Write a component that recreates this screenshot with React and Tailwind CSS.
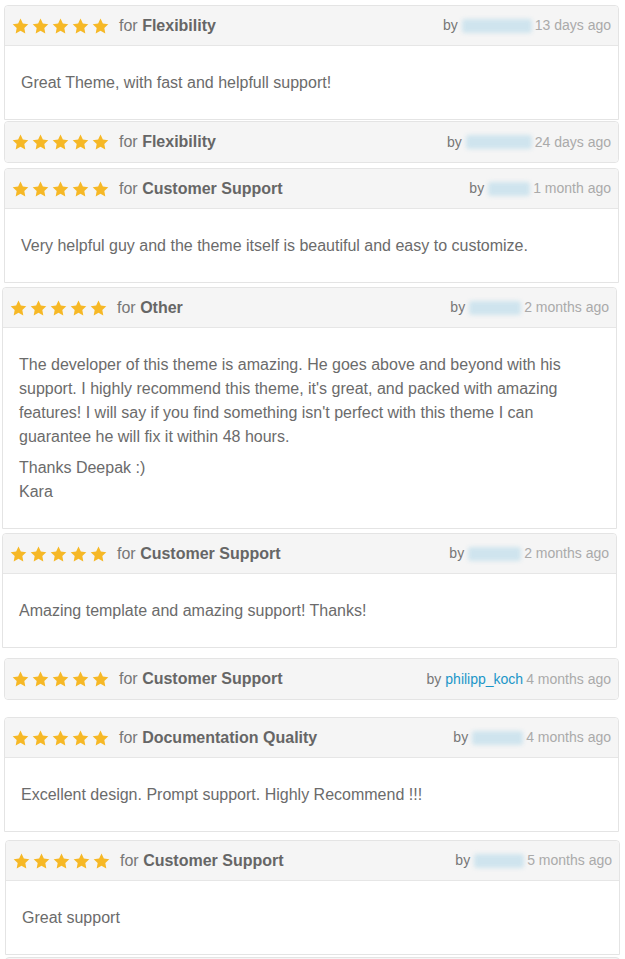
import React from 'react';

const reviews = [
  { topic: 'Flexibility', name: 70, time: '13 days ago', body: ['Great Theme, with fast and helpfull support!'], cls: 'mt-[5px] ml-[4px]' },
  { topic: 'Flexibility', name: 66, time: '24 days ago', cls: 'mt-[1px] ml-[4px]' },
  { topic: 'Customer Support', name: 42, time: '1 month ago', body: ['Very helpful guy and the theme itself is beautiful and easy to customize.'], cls: 'mt-[5px] ml-[4px]' },
  {
    topic: 'Other',
    name: 52,
    time: '2 months ago',
    body: [
      "The developer of this theme is amazing. He goes above and beyond with his support. I highly recommend this theme, it's great, and packed with amazing features! I will say if you find something isn't perfect with this theme I can guarantee he will fix it within 48 hours.",
      'Thanks Deepak :)\nKara',
    ],
    cls: 'mt-[4px] ml-[2px]',
  },
  { topic: 'Customer Support', name: 53, time: '2 months ago', body: ['Amazing template and amazing support! Thanks!'], cls: 'mt-[4px] ml-[2px]' },
  { topic: 'Customer Support', user: 'philipp_koch', time: '4 months ago', cls: 'mt-[10px] ml-[4px]' },
  { topic: 'Documentation Quality', name: 51, time: '4 months ago', body: ['Excellent design. Prompt support. Highly Recommend !!!'], cls: 'mt-[17px] ml-[4px]' },
  { topic: 'Customer Support', name: 50, time: '5 months ago', body: ['Great support'], cls: 'mt-[8px] ml-[5px]' },
];

const Star = () => (
  <svg width="17" height="16" viewBox="0 0 24 23" fill="#f6b826">
    <path d="M12 0.8l3.4 7.2 7.8 1-5.7 5.4 1.4 7.8L12 18.4l-6.9 3.8 1.4-7.8L0.8 9l7.8-1z" />
  </svg>
);

const ReviewCard = ({ review }) => (
  <div className={`w-[615px] shrink-0 border border-[#e4e4e4] bg-white ${review.body ? 'rounded-t-[4px]' : 'rounded-[4px]'} ${review.cls}`}>
    <div className={`h-[40px] flex items-center justify-between pl-[7px] pr-[7px] bg-[#f5f5f5] ${review.body ? 'border-b border-[#e6e6e6] rounded-t-[4px]' : 'rounded-[4px]'}`}>
      <div className="flex items-center">
        <div className="flex gap-[3px]">
          <Star /><Star /><Star /><Star /><Star />
        </div>
        <span className="ml-[10px] text-[16px] text-[#777]">
          for <span className="font-bold text-[#666]">{review.topic}</span>
        </span>
      </div>
      <div className="flex items-center text-[14px]">
        <span className="text-[#777]">by</span>
        {review.user ? (
          <span className="ml-[4px] text-[#1b95c8]">{review.user}</span>
        ) : (
          <span className="ml-[4px] h-[14px] rounded-[3px] bg-[#cfe4ee] blur-[2px]" style={{ width: review.name }} />
        )}
        <span className="ml-[3px] text-[#aaa]">{review.time}</span>
      </div>
    </div>
    {review.body && (
      <div className="px-[16px] pt-[25px] pb-[24px] text-[16px] leading-[24px] text-[#6b6b6b] flex flex-col gap-[7px]">
        {review.body.map((p, i) => (
          <p key={i} className="whitespace-pre-line">{p}</p>
        ))}
      </div>
    )}
  </div>
);

export default function App() {
  return (
    <div className="w-[625px] h-[959px] overflow-hidden bg-white flex flex-col font-['Liberation_Sans',Arial,sans-serif]">
      {reviews.map((r, i) => (
        <ReviewCard key={i} review={r} />
      ))}
      <div className="mt-[2px] ml-[5px] w-[615px] h-[20px] shrink-0 border border-[#e4e4e4] rounded-t-[4px] bg-[#f5f5f5]" />
    </div>
  );
}
